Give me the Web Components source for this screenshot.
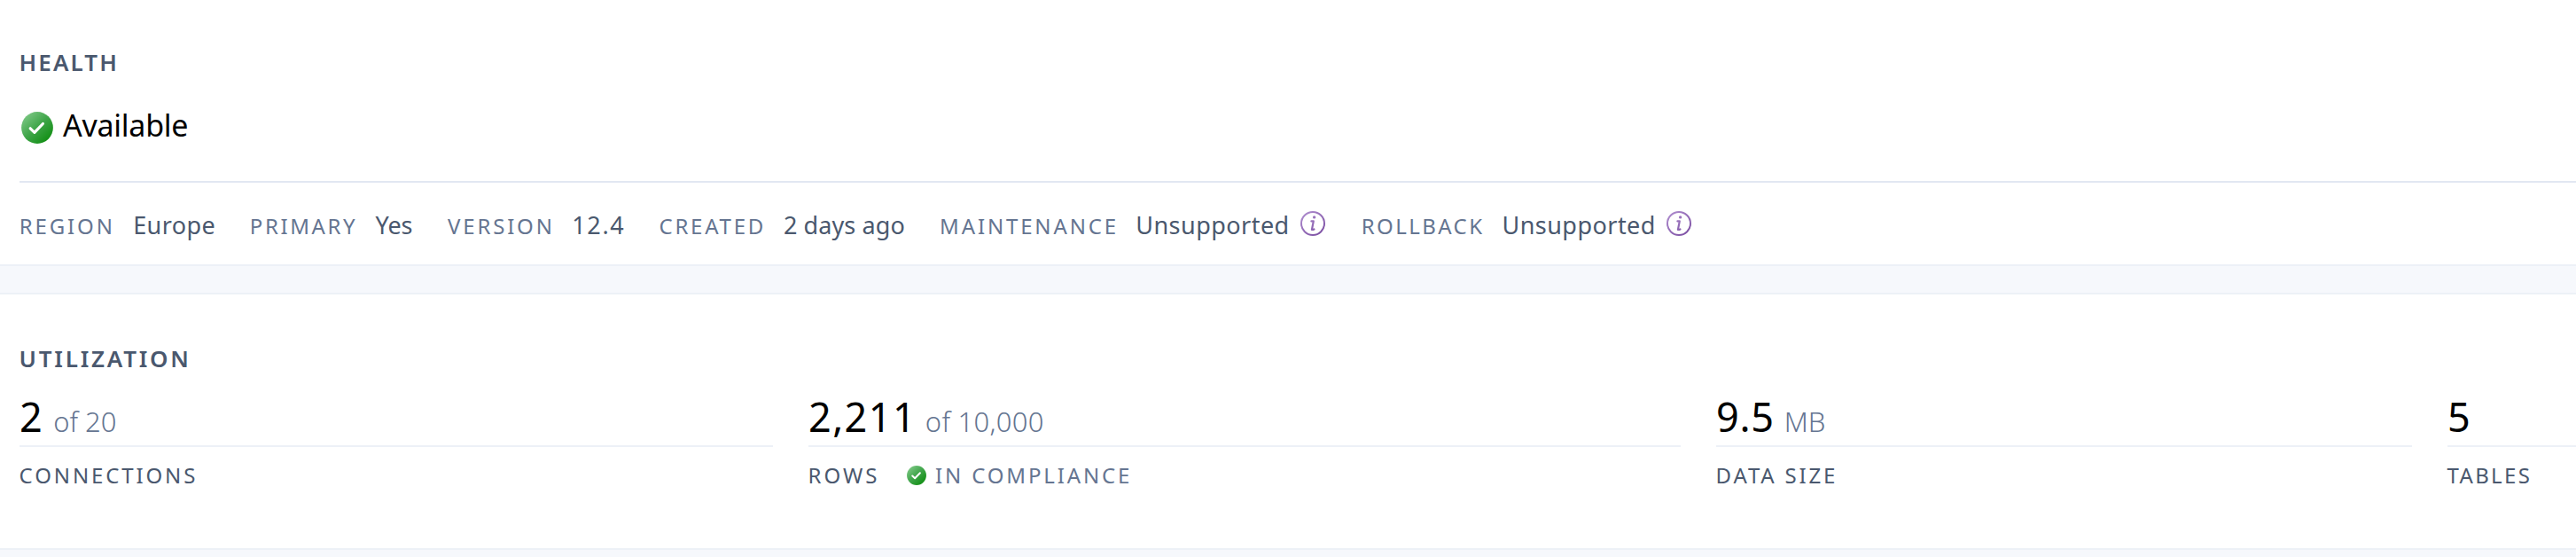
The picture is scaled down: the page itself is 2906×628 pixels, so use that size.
<!DOCTYPE html>
<html lang="en">
<head>
<meta charset="utf-8">
<title>Database overview</title>
<style>
  html, body { margin: 0; height: 100%; }
  body { background: #f6f8fc; font-family: "Noto Sans", sans-serif; color: #4a586e; overflow: hidden; }
</style>
</head>
<body>
<overview-page>
  <overview-section heading="Health">
    <health-status>Available</health-status>
    <detail-list>
      <detail-item label="Region" style="--lw:128.2px;--w:260px;--ls:2.85px;--vs:.4px">Europe</detail-item>
      <detail-item label="Primary" style="--lw:141.6px;--w:223.3px;--ls:2.6px;--vs:-.08px">Yes</detail-item>
      <detail-item label="Version" style="--lw:140px;--w:238.4px;--ls:2.8px;--vs:1.6px">12.4</detail-item>
      <detail-item label="Created" style="--lw:140.2px;--w:316.6px;--ls:2.75px;--vs:.1px">2 days ago</detail-item>
      <detail-item label="Maintenance" info style="--lw:221px;--w:475.6px;--ls:2.85px;--vs:.46px">Unsupported</detail-item>
      <detail-item label="Rollback" info style="--lw:158.6px;--w:400px;--ls:2.43px;--vs:.46px">Unsupported</detail-item>
    </detail-list>
  </overview-section>
  <overview-section heading="Utilization" style="--hs:2.75px;--mt:30px;--pt:54px">
    <metric-row>
      <metric-item value="2" unit="of 20" label="Connections" style="--gap:12.5px;--ls:2.87px;--us:-.02px"></metric-item>
      <metric-item value="2,211" unit="of 10,000" label="Rows" style="--vs:1.4px;--gap:9.8px;--ls:3px;--us:.28px">
        <compliance-badge>In compliance</compliance-badge>
      </metric-item>
      <metric-item value="9.5" unit="MB" label="Data size" style="--vs:.75px;--gap:11px;--ls:2.8px"></metric-item>
      <metric-item value="5" label="Tables" style="--ls:2.3px"></metric-item>
    </metric-row>
  </overview-section>
</overview-page>

<script>
const define = (name, html, setup) => customElements.define(name, class extends HTMLElement {
  constructor() {
    super();
    this.attachShadow({ mode: 'open' });
  }
  connectedCallback() {
    if (this.shadowRoot.firstChild) return;
    const t = document.createElement('template');
    t.innerHTML = html;
    this.shadowRoot.append(t.content.cloneNode(true));
    if (setup) setup(this, this.shadowRoot);
  }
});

define('overview-page', `
  <style>:host { display: flex; flex-direction: column; }</style>
  <slot></slot>`);

define('overview-section', `
  <style>
    :host { display: flex; flex-direction: column; background: #fff; box-sizing: border-box;
      margin-top: var(--mt, 0); padding: var(--pt, 52px) 0 0 22px; border-bottom: 2px solid #edf1f7; }
    :host([heading="Utilization"]) { border-top: 2px solid #edf1f7; height: 290px; }
    :host([heading="Health"]) { height: 300px; }
    h2 { margin: 0; font-size: 26px; line-height: 36px; font-weight: 600;
      letter-spacing: var(--hs, 2.1px); text-transform: uppercase; text-indent: -.4px; }
  </style>
  <h2></h2><slot></slot>`,
  (el, root) => { root.querySelector('h2').textContent = el.getAttribute('heading'); });

define('status-check', `
  <style>:host { display: block; flex: none; width: var(--size, 36px); height: var(--size, 36px); } svg { display: block; width: 100%; height: 100%; }</style>
  <svg viewBox="0 0 36 36">
    <defs><linearGradient id="g" x1="0.1" y1="0.1" x2="0.85" y2="0.9">
      <stop offset="0" stop-color="#7cc784"/><stop offset=".5" stop-color="#3fa549"/><stop offset="1" stop-color="#128f14"/>
    </linearGradient></defs>
    <circle cx="18" cy="18" r="17.9" fill="url(#g)"/>
    <path d="M10.2 18.8 L14.9 23.3 L24.4 13.5" fill="none" stroke="#fff" stroke-width="3.2" stroke-linecap="round" stroke-linejoin="round"/>
  </svg>`);

define('info-icon', `
  <style>:host { display: block; flex: none; width: 28px; height: 28px; } svg { display: block; }</style>
  <svg width="28" height="28" viewBox="0 0 28 28" fill="none">
    <defs><linearGradient id="g" gradientUnits="userSpaceOnUse" x1="3" y1="2" x2="24" y2="27">
      <stop offset="0" stop-color="#ad8bcd"/><stop offset="1" stop-color="#7c4fa3"/>
    </linearGradient></defs>
    <g stroke="url(#g)" stroke-linecap="round" stroke-linejoin="round">
      <circle cx="14" cy="14" r="13" stroke-width="2"/>
      <path d="M12.4 11.4 H14.8 L12.9 20.9 Q13.8 21.2 15.4 20.4" stroke-width="2.2"/>
    </g>
    <circle cx="15.6" cy="6.9" r="1.7" fill="url(#g)"/>
  </svg>`);

define('health-status', `
  <style>
    :host { display: flex; gap: 11px; margin: 30px 0 0 2px; height: 46px; color: #000;
      font-size: 34px; line-height: 46px; letter-spacing: -.26px; }
    status-check { margin-top: 8px; }
  </style>
  <status-check></status-check><span><slot></slot></span>`);

define('detail-list', `
  <style>:host { display: flex; margin-top: 40px; padding-top: 29px; border-top: 2px solid #e2e7f2; }</style>
  <slot></slot>`);

define('detail-item', `
  <style>
    :host { display: flex; align-items: baseline; flex: none; width: var(--w); height: 37px; white-space: nowrap; }
    .label { flex: none; width: var(--lw); font-size: 24px; line-height: 33px; letter-spacing: var(--ls);
      color: #657591; text-transform: uppercase; text-indent: -.2px; }
    .value { font-size: 27px; line-height: 37px; letter-spacing: var(--vs); }
    info-icon { align-self: flex-start; margin: 3px 0 0 12px; }
  </style>
  <span class="label"></span><span class="value"><slot></slot></span>`,
  (el, root) => {
    root.querySelector('.label').textContent = el.getAttribute('label');
    if (el.hasAttribute('info')) root.append(document.createElement('info-icon'));
  });

define('metric-row', `
  <style>:host { display: grid; grid-template-columns: 850px 984px 785px 1fr; column-gap: 40px; margin-top: 17px; }</style>
  <slot></slot>`);

define('metric-item', `
  <style>
    :host { display: flex; flex-direction: column; white-space: nowrap; }
    .figure { display: flex; align-items: baseline; gap: var(--gap, 12px); height: 63px; border-bottom: 2px solid #edf1f7; }
    .value { font-size: 45px; line-height: 61px; color: #000; letter-spacing: var(--vs, 0); }
    .unit { font-size: 31px; line-height: 42px; font-weight: 300; color: #657591; letter-spacing: var(--us, 0); }
    .caption { display: flex; margin-top: 15px; font-size: 24px; line-height: 33px; text-transform: uppercase; }
    .label { letter-spacing: var(--ls); text-indent: -.4px; }
  </style>
  <div class="figure"><span class="value"></span><span class="unit"></span></div>
  <div class="caption"><span class="label"></span><slot></slot></div>`,
  (el, root) => {
    for (const k of ['value', 'unit', 'label']) root.querySelector('.' + k).textContent = el.getAttribute(k) || '';
  });

define('compliance-badge', `
  <style>
    :host { display: flex; gap: 10px; margin-left: 30.5px; color: #657591; letter-spacing: 2.85px; }
    status-check { --size: 22px; margin-top: 6px; }
  </style>
  <status-check></status-check><span><slot></slot></span>`);

</script>
</body>
</html>
